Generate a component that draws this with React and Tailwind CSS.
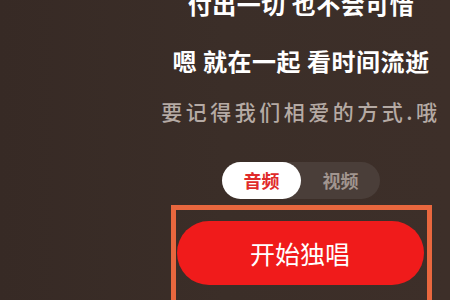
export default function App() {
  return (
    <div
      className="w-[450px] h-[300px] overflow-hidden bg-gradient-to-r from-[#372a25] via-[#3b2e28] to-[#3d2f29]"
      style={{ fontFamily: '"Noto Sans CJK SC", "Noto Sans", sans-serif' }}
    >
      <div className="flex flex-col items-center pl-[152px]">
        {/* lyrics */}
        <p className="mt-[-8px] text-[24px] leading-none tracking-[0.5px] font-semibold text-white whitespace-nowrap">
          付出一切 也不会可惜
        </p>
        <p className="mt-[33px] text-[24px] leading-none tracking-[0.5px] font-semibold text-white whitespace-nowrap">
          嗯 就在一起 看时间流逝
        </p>
        <p className="mt-[28px] text-[21px] leading-none tracking-[3.5px] font-medium text-[#b5aaa4] whitespace-nowrap">
          要记得我们相爱的方式.哦
        </p>

        {/* audio / video toggle */}
        <div className="mt-[40px] flex w-[158px] h-[37px] rounded-full bg-[#4a3e39]">
          <div className="w-[79px] h-full rounded-full bg-white flex items-center justify-center text-[18px] font-bold text-[#e02a2a]">
            音频
          </div>
          <div className="flex-1 flex items-center justify-center text-[18px] font-bold text-[#a1958f]">
            视频
          </div>
        </div>

        {/* start button, highlighted */}
        <div className="mt-[6px] w-[261px] h-[110px] border-[5px] border-[#e8673e] pt-[11px] pl-[1px]">
          <button className="w-[247px] h-[64px] rounded-full bg-[#f01b1b] text-white text-[25px] leading-none flex items-center justify-center">
            开始独唱
          </button>
        </div>
      </div>
    </div>
  );
}
